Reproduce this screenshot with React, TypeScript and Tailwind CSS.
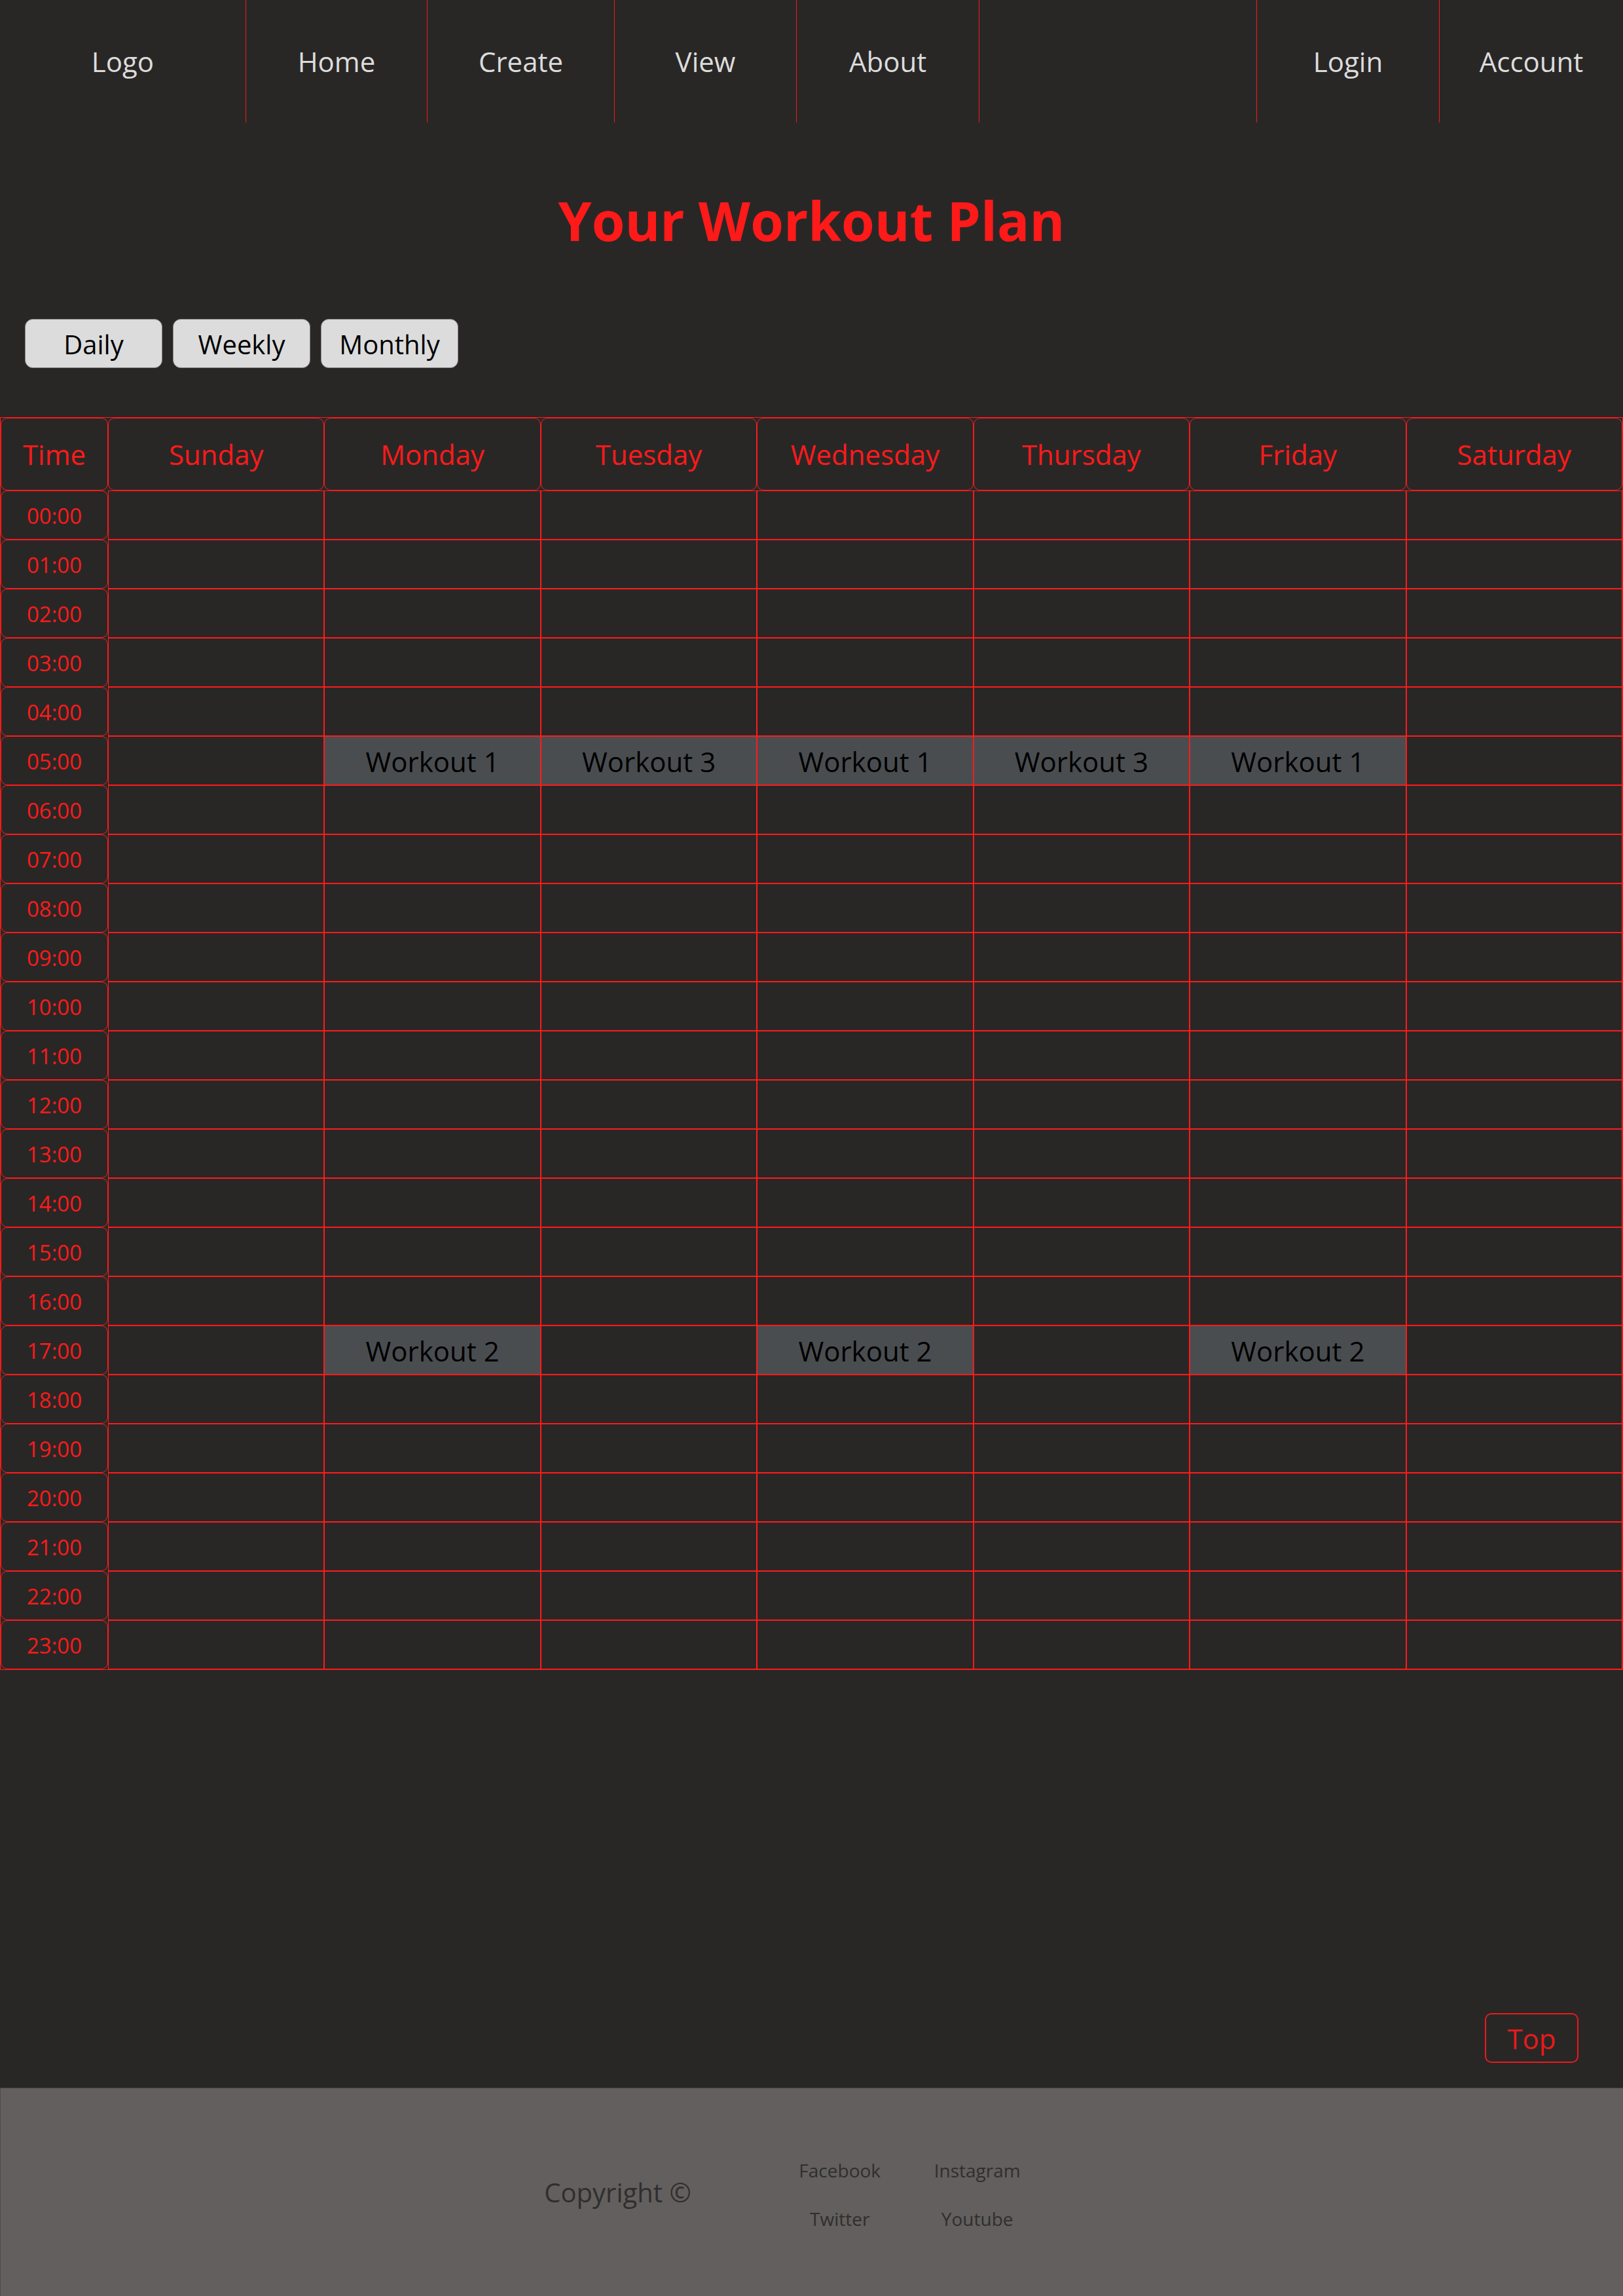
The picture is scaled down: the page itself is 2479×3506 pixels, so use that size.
const navItems = [
  { label: "Logo", w: "w-[376px]", line: true },
  { label: "Home", w: "w-[277px]", line: true },
  { label: "Create", w: "w-[286px]", line: true },
  { label: "View", w: "w-[278px]", line: true },
  { label: "About", w: "w-[279px]", line: true },
  { label: "", w: "w-[424px]", line: true },
  { label: "Login", w: "w-[279px]", line: true },
  { label: "Account", w: "w-[280px]", line: false },
];

const days = [
  "Sunday",
  "Monday",
  "Tuesday",
  "Wednesday",
  "Thursday",
  "Friday",
  "Saturday",
];

const hours = Array.from({ length: 24 }, (_, i) =>
  `${i.toString().padStart(2, "0")}:00`
);

// hour -> day index -> workout name
const plan: Record<number, Record<number, string>> = {
  5: { 1: "Workout 1", 2: "Workout 3", 3: "Workout 1", 4: "Workout 3", 5: "Workout 1" },
  17: { 1: "Workout 2", 3: "Workout 2", 5: "Workout 2" },
};

const App = () => {
  return (
    <div className="min-h-[3506px] w-full bg-[#292726] font-['Open_Sans',sans-serif]">
      <nav className="flex h-[187px]">
        {navItems.map((item, i) => (
          <div
            key={i}
            className={`${item.w} flex shrink-0 items-center justify-center text-[42px] text-[#dcdcdc] ${
              item.line ? "border-r-[1.5px] border-[#f01a1a]" : ""
            }`}
          >
            {item.label}
          </div>
        ))}
      </nav>

      <h1 className="mt-[93px] text-center text-[82px] font-bold leading-[112px] text-[#ff1a1a]">
        Your Workout Plan
      </h1>

      <div className="mt-[95px] flex gap-[16px] pl-[38px]">
        {["Daily", "Weekly", "Monthly"].map((b) => (
          <button
            key={b}
            className="flex h-[75px] w-[210px] items-center justify-center rounded-[12px] border border-[#8a8a8a] bg-[#dcdcdc] pt-[2px] text-[40px] text-black"
          >
            {b}
          </button>
        ))}
      </div>

      <div className="mt-[75px] border border-[#ff1a1a]">
        <div className="grid grid-cols-[164px_repeat(7,minmax(0,1fr))]">
          <div className="flex h-[111px] items-center justify-center rounded-[10px] border border-[#ff1a1a] text-[42px] text-[#ff1a1a]">
            Time
          </div>
          {days.map((d) => (
            <div
              key={d}
              className="flex h-[111px] items-center justify-center rounded-[10px] border border-[#ff1a1a] text-[42px] text-[#ff1a1a]"
            >
              {d}
            </div>
          ))}

          {hours.map((h, hi) => (
            <>
              <div
                key={h}
                className="flex h-[75px] items-center justify-center rounded-[10px] border border-[#ff1a1a] pt-[3px] text-[33px] text-[#ff1a1a]"
              >
                {h}
              </div>
              {days.map((d, di) => {
                const w = plan[hi]?.[di];
                return (
                  <div
                    key={h + d}
                    className={`flex h-[75px] items-center justify-center border border-[#ff1a1a] pt-[2px] text-[42px] text-black ${
                      w ? "bg-[#4a4d50]" : ""
                    }`}
                  >
                    {w}
                  </div>
                );
              })}
            </>
          ))}
        </div>
      </div>

      <div className="mt-[524px] mb-[38px] flex justify-end pr-[68px]">
        <button className="flex h-[76px] w-[143px] items-center justify-center rounded-[10px] border-2 border-[#e81a1a] text-[42px] text-[#e81a1a]">
          Top
        </button>
      </div>

      <footer className="flex h-[318px] items-center justify-center border-t border-l border-[#4a4b52] bg-[#625f5e] pr-[51px]">
        <p className="text-[40px] text-[#302e2d]">Copyright ©</p>
        <div className="ml-[122px] mt-[8px] grid grid-cols-[210px_210px] gap-y-[37px] text-center text-[28px] leading-[37px] text-[#302e2d]">
          <span>Facebook</span>
          <span>Instagram</span>
          <span>Twitter</span>
          <span>Youtube</span>
        </div>
      </footer>
    </div>
  );
};

export default App;
